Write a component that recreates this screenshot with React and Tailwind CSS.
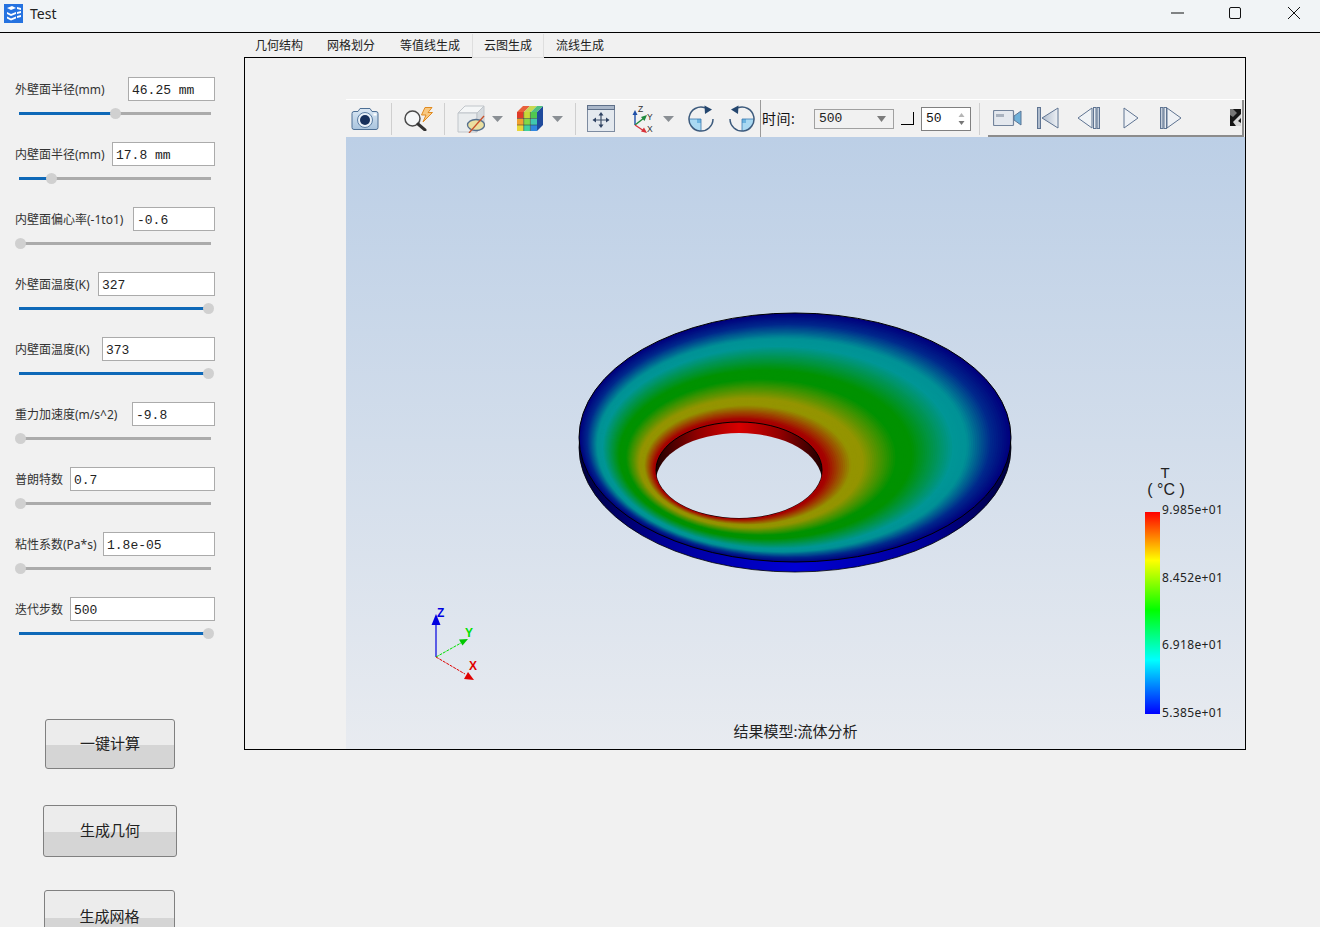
import React from 'react';

const params = [
  { label: '外壁面半径(mm)', value: '46.25 mm', box: 'w-[87px]', thumb: 115 },
  { label: '内壁面半径(mm)', value: '17.8 mm', box: 'w-[103px]', thumb: 51 },
  { label: '内壁面偏心率(-1to1)', value: '-0.6', box: 'w-[82px]', thumb: 20 },
  { label: '外壁面温度(K)', value: '327', box: 'w-[117px]', thumb: 208 },
  { label: '内壁面温度(K)', value: '373', box: 'w-[113px]', thumb: 208 },
  { label: '重力加速度(m/s^2)', value: '-9.8', box: 'w-[83px]', thumb: 20 },
  { label: '普朗特数', value: '0.7', box: 'w-[145px]', thumb: 20 },
  { label: '粘性系数(Pa*s)', value: '1.8e-05', box: 'w-[112px]', thumb: 20 },
  { label: '迭代步数', value: '500', box: 'w-[145px]', thumb: 208 },
];

const tabs = [
  { name: '几何结构', cls: 'px-[12px]' },
  { name: '网格划分', cls: 'px-[12px]' },
  { name: '等值线生成', cls: 'pl-[13px] pr-[12px]' },
  { name: '云图生成', cls: 'px-[11px] bg-[#f1f1f1] border-x border-b border-[#dedede]' },
  { name: '流线生成', cls: 'px-[12px]' },
];

const legendLabels = ['9.985e+01', '8.452e+01', '6.918e+01', '5.385e+01'];

function Slider({ thumb }) {
  return (
    <div className="relative ml-[19px] mt-[11px] w-[192px] h-[3px] bg-[#ababab]">
      <div className="h-full bg-[#0f69b8]" style={{ width: thumb - 19 }} />
      <div
        className="absolute top-[-4px] w-[11px] h-[11px] rounded-full bg-[#d0d0d0]"
        style={{ left: thumb - 19 - 5.5 }}
      />
    </div>
  );
}

function ParamRow({ item }) {
  return (
    <div className="h-[65px]">
      <div className="flex items-center justify-between ml-[15px] w-[200px] h-[24px]">
        <span className="mt-px text-[12px] text-[#333] whitespace-nowrap">{item.label}</span>
        <input
          readOnly
          value={item.value}
          className={`${item.box} h-[24px] bg-white border border-[#ababab] pl-[3px] pt-[2px] text-[13px] text-[#222] font-['Liberation_Mono',monospace] outline-none`}
        />
      </div>
      <Slider thumb={item.thumb} />
    </div>
  );
}

function ActionButton({ children, className }) {
  return (
    <button
      className={`${className} block pb-px border border-[#808080] rounded-[3px] bg-[linear-gradient(#ececec_52%,#d5d5d5_52%)] text-[15px] text-[#222]`}
    >
      {children}
    </button>
  );
}

function Sep({ className }) {
  return <div className={`${className} w-px h-[32px] bg-[#cfcfcf] shrink-0`} />;
}

function DropArrow({ className }) {
  return (
    <svg className={`${className} shrink-0`} width="11" height="8" viewBox="0 0 11 8">
      <polygon points="0,1 11,1 5.5,7" fill="#8a8f94" />
    </svg>
  );
}

function CameraIcon({ className }) {
  return (
    <svg className={`${className} shrink-0`} width="28" height="24" viewBox="0 0 28 24">
      <defs>
        <linearGradient id="cam" x1="0" y1="0" x2="0" y2="1">
          <stop offset="0" stopColor="#dbe8f4" />
          <stop offset="1" stopColor="#a9c4de" />
        </linearGradient>
      </defs>
      <path d="M1 6.5q0-2 2-2h4l2-3h10l2 3h4q2 0 2 2v14q0 2-2 2H3q-2 0-2-2z" fill="url(#cam)" stroke="#4d6f95" />
      <circle cx="14" cy="13" r="7.5" fill="#e8f0f8" stroke="#5b7da3" />
      <circle cx="14" cy="13" r="5" fill="#17305c" />
      <rect x="22.5" y="6.5" width="3" height="2" fill="#fff" />
    </svg>
  );
}

function SearchBoltIcon({ className }) {
  return (
    <svg className={`${className} shrink-0`} width="29" height="24" viewBox="0 0 29 24">
      <circle cx="8.5" cy="11.5" r="7.5" fill="#f5f7f8" stroke="#4a4a4a" strokeWidth="1.5" />
      <line x1="14" y1="17" x2="21" y2="23" stroke="#333" strokeWidth="3" strokeLinecap="round" />
      <polygon points="21,0.5 28,0.5 24,5.5 28.5,5.5 19,15 22,8 17.5,8" fill="#f8c880" stroke="#e08a20" strokeWidth="1" />
    </svg>
  );
}

function BoxIcon({ className }) {
  return (
    <svg className={`${className} shrink-0`} width="28" height="28" viewBox="0 0 28 28">
      <polygon points="1,8 8,1 27,1 20,8" fill="#f4f6f7" stroke="#c0c5ca" />
      <polygon points="1,8 20,8 20,27 1,27" fill="#e9ecee" stroke="#c0c5ca" />
      <polygon points="20,8 27,1 27,20 20,27" fill="#d5dade" stroke="#c0c5ca" />
      <ellipse cx="19" cy="20" rx="8.5" ry="5.5" fill="#eadfa0" stroke="#56708e" strokeWidth="1.3" />
      <line x1="12" y1="28" x2="27" y2="11" stroke="#c8502a" strokeWidth="1.3" />
    </svg>
  );
}

function CubeIcon({ className }) {
  return (
    <svg className={`${className} shrink-0`} width="28" height="27" viewBox="0 0 28 27">
      <polygon points="21,7 27,1 27,20 21,26" fill="#1f4a9c" />
      <polygon points="1,7 7,1 14,1 8,7" fill="#e8603c" />
      <polygon points="8,7 14,1 21,1 15,7" fill="#c8d850" />
      <polygon points="15,7 21,1 27,1 21,7" fill="#50c080" />
      <rect x="1" y="7" width="6.7" height="6.5" fill="#e03a28" />
      <rect x="7.7" y="7" width="6.7" height="6.5" fill="#c8d838" />
      <rect x="14.4" y="7" width="6.6" height="6.5" fill="#50c850" />
      <rect x="1" y="13.5" width="6.7" height="6.5" fill="#f0a030" />
      <rect x="7.7" y="13.5" width="6.7" height="6.5" fill="#80d848" />
      <rect x="14.4" y="13.5" width="6.6" height="6.5" fill="#40c8b0" />
      <rect x="1" y="20" width="6.7" height="6" fill="#e8d838" />
      <rect x="7.7" y="20" width="6.7" height="6" fill="#40d0a0" />
      <rect x="14.4" y="20" width="6.6" height="6" fill="#3088e0" />
      <path d="M7.7 7v19M14.4 7v19M1 13.5h20M1 20h20" stroke="#333" strokeWidth="0.5" />
    </svg>
  );
}

function FitIcon({ className }) {
  return (
    <svg className={`${className} shrink-0`} width="28" height="27" viewBox="0 0 28 27">
      <rect x="0.5" y="0.5" width="27" height="26" fill="#e4e9ef" stroke="#7d8ba0" />
      <rect x="0.5" y="0.5" width="27" height="4" fill="#a9b6c8" stroke="#5e6f88" />
      <path d="M14 9v11M8.5 15h11" stroke="#3d4f68" strokeWidth="1.2" />
      <polygon points="14,7 11.5,10.5 16.5,10.5" fill="#2e4262" />
      <polygon points="14,23 11.5,19.5 16.5,19.5" fill="#2e4262" />
      <polygon points="5.5,15 9,12.5 9,17.5" fill="#2e4262" />
      <polygon points="22.5,15 19,12.5 19,17.5" fill="#2e4262" />
    </svg>
  );
}

function AxesIcon({ className }) {
  return (
    <svg className={`${className} shrink-0`} width="24" height="28" viewBox="0 0 24 28">
      <line x1="3" y1="20" x2="3" y2="9" stroke="#1f4fa8" strokeWidth="1.4" />
      <polygon points="3,5 0.5,10 5.5,10" fill="#1f4fa8" />
      <line x1="3" y1="20" x2="12" y2="13" stroke="#1f8a3c" strokeWidth="1.4" />
      <polygon points="15,10 9,12 12.5,16" fill="#1f8a3c" />
      <line x1="3" y1="20" x2="12" y2="26" stroke="#d8323a" strokeWidth="1.4" />
      <polygon points="15,28 9,26.5 12,22.5" fill="#d8323a" />
      <text x="6" y="7" fontSize="8.5" fill="#333" fontFamily="Liberation Sans">Z</text>
      <text x="15" y="15" fontSize="8.5" fill="#333" fontFamily="Liberation Sans">Y</text>
      <text x="15" y="27" fontSize="8.5" fill="#333" fontFamily="Liberation Sans">X</text>
    </svg>
  );
}

function RotateIcon({ className, flip }) {
  return (
    <svg className={`${className} shrink-0 ${flip ? '-scale-x-100' : ''}`} width="26" height="27" viewBox="0 0 26 27">
      <path d="M1 14h12v12A12 12 0 0 1 1 14z" fill="#a9d9f2" />
      <path d="M9 14h4v4H9z" fill="#6cb4e0" />
      <path d="M1 14h12v12" fill="none" stroke="#3a78b0" strokeWidth="0.8" />
      <path d="M17 2.7A12 12 0 1 0 25 14" fill="none" stroke="#3c5a7c" strokeWidth="1.5" />
      <polygon points="16.5,0.5 24,4.5 17,9" fill="#24466e" />
    </svg>
  );
}

function VideoIcon({ className }) {
  return (
    <svg className={`${className} shrink-0`} width="29" height="16" viewBox="0 0 29 16">
      <rect x="0.5" y="0.5" width="20" height="15" rx="1" fill="#e4e8ee" stroke="#73849c" strokeWidth="1.2" />
      <rect x="3" y="4" width="8" height="3" fill="#a9b2bf" />
      <polygon points="21,6 28,1 28,15 21,10" fill="#6fb0d8" stroke="#5c7696" />
    </svg>
  );
}

function PlayerIcon({ className, w, children }) {
  return (
    <svg className={`${className} shrink-0`} width={w} height="22" viewBox={`0 0 ${w} 22`}>
      <defs>
        <linearGradient id="playFill" x1="0" y1="0" x2="1" y2="0">
          <stop offset="0" stopColor="#aebbcc" />
          <stop offset="1" stopColor="#eef1f5" />
        </linearGradient>
      </defs>
      {children}
    </svg>
  );
}

function Toolbar() {
  return (
    <div className="flex items-center h-[38px] bg-[#f1f1f1] border-t border-white">
      <CameraIcon className="ml-[5px]" />
      <Sep className="ml-[12px]" />
      <SearchBoltIcon className="ml-[12px]" />
      <Sep className="ml-[11px]" />
      <BoxIcon className="ml-[12px]" />
      <DropArrow className="ml-[7px]" />
      <CubeIcon className="ml-[13px]" />
      <DropArrow className="ml-[8px]" />
      <Sep className="ml-[12px]" />
      <FitIcon className="ml-[11px]" />
      <AxesIcon className="ml-[17px]" />
      <DropArrow className="ml-[7px]" />
      <RotateIcon className="ml-[14px]" />
      <RotateIcon className="ml-[15px]" flip />
      <div className="ml-[5px] w-px h-full bg-[#9a9a9a] shrink-0" />
      <span className="ml-px w-[38px] text-[14px] text-[#111] whitespace-nowrap tracking-[0.5px] shrink-0">时间:</span>
      <div className="ml-[14px] w-[80px] h-[20px] flex items-center justify-between px-[4px] border border-[#a0a0a0] shrink-0">
        <span className="text-[13px] text-[#222] font-['Liberation_Mono',monospace]">500</span>
        <svg width="11" height="8" viewBox="0 0 11 8" className="mr-[2px]">
          <polygon points="1,1 10,1 5.5,7" fill="#7b7b7b" />
        </svg>
      </div>
      <div className="ml-[7px] w-[13px] h-[13px] border-r border-b border-black shrink-0" />
      <div className="ml-[7px] w-[50px] h-[24px] flex items-center justify-between pl-[4px] pr-[5px] bg-white border border-[#808080] shrink-0">
        <span className="text-[13px] text-[#111] font-['Liberation_Mono',monospace]">50</span>
        <svg width="7" height="14" viewBox="0 0 7 14">
          <polygon points="3.5,1 6.5,5 0.5,5" fill="#b5b5b5" />
          <polygon points="3.5,13 6.5,9 0.5,9" fill="#777" />
        </svg>
      </div>
      <Sep className="ml-[8px]" />
      <div className="ml-[8px] mr-px flex-1 h-full flex items-center bg-[#f1f1f1] border-r-2 border-b-2 border-[#8c8c8c]">
        <VideoIcon className="ml-[5px]" />
        <PlayerIcon className="ml-[15px]" w={22}>
          <rect x="0.5" y="0.5" width="3" height="21" fill="#aebbcc" stroke="#5f7492" />
          <polygon points="21,1 5,11 21,21" fill="url(#playFill)" stroke="#5f7492" />
        </PlayerIcon>
        <PlayerIcon className="ml-[18px]" w={23}>
          <polygon points="15,1 1,11 15,21" fill="#f0f3f6" stroke="#5f7492" />
          <rect x="16.5" y="0.5" width="2.5" height="21" fill="#e6ebf1" stroke="#5f7492" />
          <rect x="20" y="0.5" width="2.5" height="21" fill="#c5cfdc" stroke="#5f7492" />
        </PlayerIcon>
        <PlayerIcon className="ml-[23px]" w={16}>
          <polygon points="1,1 15,11 1,21" fill="#eef1f5" stroke="#5f7492" />
        </PlayerIcon>
        <PlayerIcon className="ml-[21px]" w={22}>
          <rect x="0.5" y="0.5" width="2.5" height="21" fill="#c5cfdc" stroke="#5f7492" />
          <rect x="4" y="0.5" width="2.5" height="21" fill="#e6ebf1" stroke="#5f7492" />
          <polygon points="7,1 21,11 7,21" fill="#eef1f5" stroke="#5f7492" />
        </PlayerIcon>
        <svg className="ml-[48px] shrink-0" width="11" height="17" viewBox="0 0 11 17">
          <rect width="11" height="17" fill="#161616" />
          <polygon points="0,0 3,0 7,4 3,8 0,6" fill="#777" />
          <polygon points="11,5 7,9 3,13 6,17 11,17 11,14 8,12 11,9" fill="#d8d8d8" />
        </svg>
      </div>
    </div>
  );
}

// temperature ramp of the plate, t = 0 at the hole and 1 at the outer rim
const ramp = [
  [0, [165, 0, 0]],
  [0.03, [165, 0, 0]],
  [0.16, [148, 148, 0]],
  [0.22, [148, 148, 0]],
  [0.4, [0, 146, 0]],
  [0.48, [0, 146, 0]],
  [0.7, [0, 150, 150]],
  [0.77, [0, 146, 150]],
  [0.9, [0, 40, 140]],
  [1, [0, 0, 125]],
];

function rampColor(t) {
  for (let i = 1; i < ramp.length; i++) {
    if (t <= ramp[i][0]) {
      const [t0, c0] = ramp[i - 1];
      const [t1, c1] = ramp[i];
      const k = (t - t0) / (t1 - t0);
      return `rgb(${c0.map((c, j) => Math.round(c + (c1[j] - c) * k)).join(',')})`;
    }
  }
  return 'rgb(0,0,125)';
}

const hole = { cx: 739, cy: 470, rx: 83, ry: 48 };
const rim = { cx: 795, cy: 437.5, rx: 216, ry: 124.5 };

function Plate() {
  const bands = [];
  for (let i = 90; i >= 0; i--) {
    const t = i / 90;
    bands.push(
      <ellipse
        key={i}
        cx={hole.cx + (rim.cx - hole.cx) * t}
        cy={hole.cy + (rim.cy - hole.cy) * t}
        rx={hole.rx + (rim.rx - hole.rx) * t}
        ry={hole.ry + (rim.ry - hole.ry) * t}
        fill={rampColor(t)}
      />
    );
  }
  return (
    <>
      <defs>
        <linearGradient id="sideBlue" x1="0" y1="0" x2="1" y2="0">
          <stop offset="0" stopColor="#000040" />
          <stop offset="0.2" stopColor="#000098" />
          <stop offset="0.5" stopColor="#0000d4" />
          <stop offset="0.8" stopColor="#000098" />
          <stop offset="1" stopColor="#000040" />
        </linearGradient>
        <linearGradient id="wallRed" x1="0" y1="0" x2="1" y2="0">
          <stop offset="0" stopColor="#200000" />
          <stop offset="0.25" stopColor="#900000" />
          <stop offset="0.5" stopColor="#d80000" />
          <stop offset="0.75" stopColor="#900000" />
          <stop offset="1" stopColor="#200000" />
        </linearGradient>
        <clipPath id="holeClip">
          <ellipse cx={hole.cx} cy={hole.cy} rx={hole.rx} ry={hole.ry} />
        </clipPath>
        <mask id="throughHole" maskUnits="userSpaceOnUse" x="346" y="137" width="899" height="612">
          <rect x="346" y="137" width="899" height="612" fill="white" />
          <ellipse cx={hole.cx} cy={hole.cy + 11} rx={hole.rx} ry={hole.ry} fill="black" clipPath="url(#holeClip)" />
        </mask>
      </defs>
      <g mask="url(#throughHole)">
        <ellipse cx={rim.cx} cy={rim.cy + 10} rx={rim.rx} ry={rim.ry} fill="url(#sideBlue)" stroke="#000" strokeWidth="0.8" />
        {bands}
        <ellipse cx={rim.cx} cy={rim.cy} rx={rim.rx} ry={rim.ry} fill="none" stroke="#000" strokeWidth="1" />
        <ellipse cx={hole.cx} cy={hole.cy} rx={hole.rx} ry={hole.ry} fill="url(#wallRed)" stroke="#000" strokeWidth="1" />
      </g>
    </>
  );
}

function Triad() {
  return (
    <g fontFamily="Liberation Sans" fontWeight="bold" fontSize="12">
      <line x1="436" y1="657" x2="436" y2="618" stroke="#0000e0" strokeWidth="1.2" />
      <path d="M436 614l4.5 11h-9z" fill="#0000e0" />
      <text x="437" y="617" fill="#0000e0">Z</text>
      <line x1="436" y1="657" x2="461" y2="643" stroke="#00e000" strokeWidth="1" strokeDasharray="3 1" />
      <path d="M468 639l-9 0.5 3.5 6z" fill="#00c800" />
      <text x="465" y="637" fill="#00e000">Y</text>
      <line x1="436" y1="657" x2="465" y2="674" stroke="#e00000" strokeWidth="1" strokeDasharray="3 1" />
      <path d="M474 680l-10 -1 4 -7z" fill="#e00000" />
      <text x="469" y="670" fill="#e00000">X</text>
    </g>
  );
}

function Legend() {
  return (
    <div className="absolute left-[799px] top-[327px] w-[82px] text-[#222]">
      <div className="ml-px w-[38px] text-center text-[15px] leading-[17px] font-['Liberation_Sans',sans-serif]">T</div>
      <div className="-ml-px w-[44px] text-center text-[16px] leading-[17px] whitespace-nowrap font-['Liberation_Sans',sans-serif]">( °C )</div>
      <div className="mt-[14px] flex">
        <div className="w-[15px] h-[202px] bg-[linear-gradient(#ff0000,#ffff00_24%,#00ff00_48.6%,#00ffff_73.3%,#0000ff)]" />
        <div className="ml-[2px] -mt-[12px] h-[223px] flex flex-col justify-between text-[12px] leading-[20px] font-['Noto_Sans',sans-serif] tracking-[0.35px] whitespace-nowrap">
          {legendLabels.map((text) => <span key={text}>{text}</span>)}
        </div>
      </div>
    </div>
  );
}

function Viewport() {
  return (
    <div className="relative h-[612px] bg-[linear-gradient(#bccfe6,#e8ebf0)] overflow-hidden">
      <svg className="absolute inset-0" width="899" height="612" viewBox="346 137 899 612">
        <Plate />
        <Triad />
      </svg>
      <Legend />
      <div className="absolute bottom-[8px] left-0 right-0 text-center text-[15px] leading-[20px] text-[#222]">结果模型:流体分析</div>
    </div>
  );
}

export default function App() {
  return (
    <div className="w-[1320px] h-[927px] overflow-hidden bg-[#f1f1f1] font-['Noto_Sans','Noto_Sans_CJK_SC',sans-serif]">
      <div className="h-[33px] flex items-center bg-[#f1f4f6] border-b border-black">
        <svg className="ml-[4px] -mt-[5px]" width="19" height="19" viewBox="0 0 19 19">
          <rect width="19" height="19" fill="#2472e0" />
          <path d="M3 4l5-2 4 2-5 2zM3 8l4 2 5-2v2l-5 2-4-2zM3 12.5l4 2 5-2v2l-5 2-4-2zM13 3l4 1v2l-4-1zM13 8l4-1v2l-4 1zM13 12l4-1v2l-4 1z" fill="#fff" />
        </svg>
        <span className="ml-[7px] -mt-[5px] text-[14px] text-[#222]">Test</span>
        <div className="ml-auto flex items-center -mt-[7px]">
          <svg width="13" height="2" viewBox="0 0 13 2"><rect width="13" height="1" y="0.5" fill="#111" /></svg>
          <svg className="ml-[45px]" width="12" height="12" viewBox="0 0 12 12"><rect x="0.5" y="0.5" width="11" height="11" rx="1.5" fill="none" stroke="#111" /></svg>
          <svg className="ml-[47px] mr-[20px]" width="12" height="12" viewBox="0 0 12 12"><path d="M0 0l12 12M12 0L0 12" stroke="#111" /></svg>
        </div>
      </div>

      <div className="flex">
        <aside className="w-[244px] shrink-0 pt-[44px]">
          {params.map((item) => <ParamRow key={item.label} item={item} />)}
          <ActionButton className="ml-[45px] mt-[57px] w-[130px] h-[50px]">一键计算</ActionButton>
          <ActionButton className="ml-[43px] mt-[36px] w-[134px] h-[52px]">生成几何</ActionButton>
          <ActionButton className="ml-[44px] mt-[33px] w-[131px] h-[54px]">生成网格</ActionButton>
        </aside>

        <main className="w-[1002px] shrink-0">
          <div className="relative z-10 flex h-[25px] -mb-px pt-px -ml-px">
            {tabs.map((tab) => (
              <div key={tab.name} className={`${tab.cls} h-[24px] text-[12px] leading-[24px] text-[#222]`}>
                {tab.name}
              </div>
            ))}
          </div>
          <div className="h-[693px] border border-black pt-[41px] pl-[101px]">
            <Toolbar />
            <Viewport />
          </div>
        </main>
      </div>
    </div>
  );
}
